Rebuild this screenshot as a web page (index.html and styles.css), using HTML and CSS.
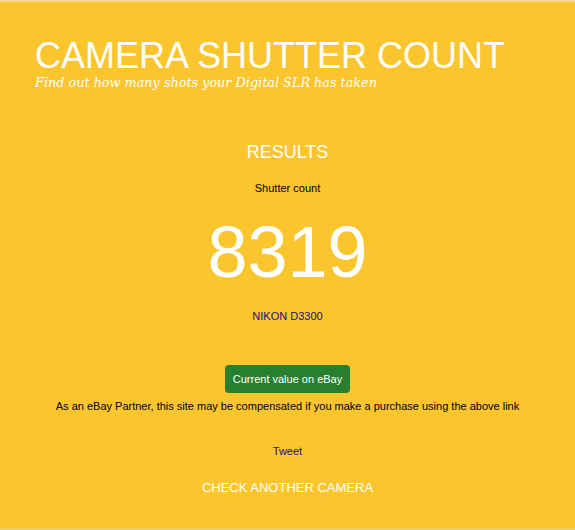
FILE: index.html
```html
<!DOCTYPE html>
<html>

<head>
    <meta name="viewport" content="width=device-width, initial-scale=1.0" charset="utf-8">
    <link rel="stylesheet" href="styles.css">
</head>

<body>
    <div class="page">
        <div class="header">
            <h1 class="title">CAMERA SHUTTER COUNT</h1>
            <div class="tagline">Find out how many shots your Digital SLR has taken</div>
        </div>

        <div class="results">
            <h2 class="heading">RESULTS</h2>
            <div class="label">Shutter count</div>
            <div class="count">8319</div>
            <a class="model" href="#">NIKON D3300</a>

            <a class="button" href="#">Current value on eBay</a>
            <div class="note">As an eBay Partner, this site may be compensated if you make a purchase using the above link</div>

            <a class="tweet" href="#">Tweet</a>
            <a class="again" href="#">CHECK ANOTHER CAMERA</a>
        </div>
    </div>
</body>

</html>
```

FILE: styles.css
```css
html, body {
    margin: 0;
    height: 100%;
}

body {
    background-color: #fbc52d;
    font-family: "Liberation Sans", Arial, sans-serif;
    color: #000;
}

.page {
    min-height: 526px;
    border-top: 2px solid #f6d98a;
    border-bottom: 2px solid #f0cd62;
}

.header {
    padding: 36px 0 0 35px;
}

.title {
    margin: 0;
    font-weight: normal;
    font-size: 36px;
    line-height: 36px;
    color: #fff;
}

.tagline {
    font-family: "DejaVu Serif", Georgia, serif;
    font-style: italic;
    font-size: 12.8px;
    line-height: 18px;
    color: #fff;
}

.results {
    display: flex;
    flex-direction: column;
    align-items: center;
    padding-top: 49px;
}

.heading {
    margin: 0;
    font-weight: normal;
    font-size: 18px;
    line-height: 22px;
    color: #fff;
}

.label {
    margin-top: 18px;
    font-size: 11px;
    line-height: 14px;
}

.count {
    margin-top: 17px;
    font-size: 72px;
    line-height: 80px;
    color: #fff;
}

.model {
    margin-top: 17px;
    font-size: 11px;
    line-height: 14px;
    color: #1a0d80;
    text-decoration: none;
}

.button {
    margin-top: 42px;
    padding: 7px 8px;
    background-color: #2a7f2e;
    border-radius: 4px;
    color: #fff;
    font-size: 11px;
    line-height: 14px;
    text-decoration: none;
}

.note {
    margin-top: 6px;
    font-size: 11px;
    line-height: 14px;
}

.tweet {
    margin-top: 31px;
    font-size: 11px;
    line-height: 14px;
    color: #1a0d80;
    text-decoration: none;
}

.again {
    margin-top: 22px;
    font-size: 13px;
    line-height: 16px;
    color: #fff;
    text-decoration: none;
}
```
